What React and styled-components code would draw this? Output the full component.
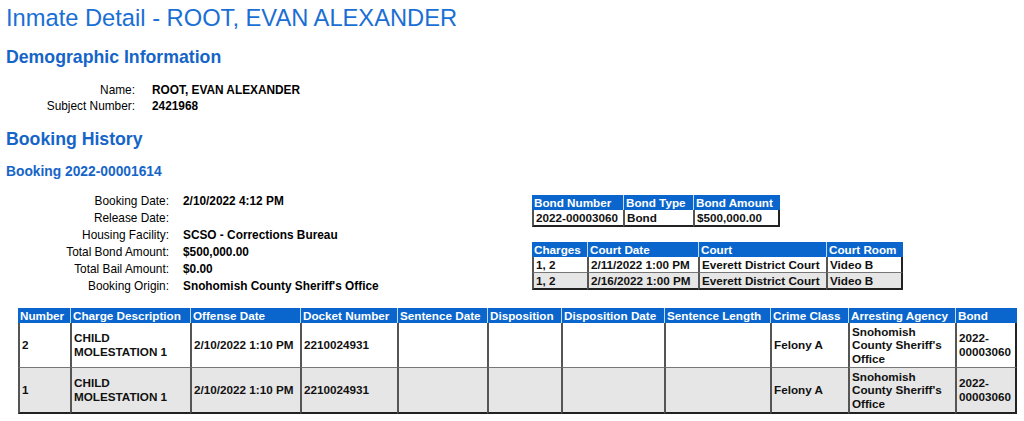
import React from "react";
import styled, { createGlobalStyle } from "styled-components";

const GlobalStyle = createGlobalStyle`
  body {
    margin: 0;
    background: #fff;
    font-family: "Liberation Sans", Arial, sans-serif;
    color: #111;
  }
`;

const Page = styled.div`
  padding: 4px 6px 0 6px;
  width: 1024px;
  box-sizing: border-box;
`;

const Title = styled.h1`
  margin: 0;
  font-size: 23.7px;
  line-height: 28px;
  font-weight: normal;
  color: #1a6fd4;
`;

const SectionTitle = styled.h2`
  margin: ${(p) => p.$top}px 0 0 0;
  font-size: 17.7px;
  line-height: 22px;
  font-weight: bold;
  color: #1565c8;
`;

const BookingTitle = styled.h3`
  margin: 14px 0 0 0;
  font-size: 13.8px;
  line-height: 16px;
  font-weight: bold;
  color: #1565c8;
`;

const Details = styled.div`
  display: grid;
  grid-template-columns: ${(p) => p.$labelWidth}px auto;
  grid-auto-rows: ${(p) => p.$rowHeight}px;
  column-gap: ${(p) => p.$gap}px;
  align-items: center;
  margin: ${(p) => p.$top}px 0 0 12px;
  font-size: 11.85px;
  align-content: start;
`;

const Label = styled.div`
  text-align: right;
  white-space: nowrap;
  color: #000;
`;

const Value = styled.div`
  font-weight: bold;
  white-space: nowrap;
  color: #000;
`;

const BookingTop = styled.div`
  display: flex;
  align-items: flex-start;
`;

const LeftCol = styled.div`
  width: 526px;
`;

const RightCol = styled.div`
  display: flex;
  flex-direction: column;
  align-items: flex-start;
  gap: 15px;
  padding-top: 15px;
`;

const Grid = styled.table`
  border-collapse: separate;
  border-spacing: 0;
  font-size: 11.7px;
  table-layout: fixed;
  margin-left: ${(p) => p.$indent || 0}px;
  margin-top: ${(p) => p.$top || 0}px;
  color: #111;
`;

const Th = styled.th`
  box-sizing: border-box;
  width: ${(p) => p.$w}px;
  background: #0a66cc;
  color: #fff;
  font-weight: bold;
  text-align: left;
  padding: 0 2px;
  height: 15px;
  line-height: 15px;
  white-space: nowrap;
  overflow: hidden;
  border-left: 1px solid #c4daf2;
  &:first-child {
    border-left: none;
  }
`;

const Tr = styled.tr`
  background: ${(p) => (p.$alt ? "#e6e6e6" : "#fff")};
`;

const Td = styled.td`
  font-weight: bold;
  padding: 0 2px;
  height: ${(p) => p.$h}px;
  line-height: 13.6px;
  vertical-align: middle;
  white-space: ${(p) => (p.$wrap ? "normal" : "nowrap")};
  border-left: 2px solid #555;
  border-bottom: 1px solid #777;
  &:last-child {
    border-right: 2px solid #222;
  }
  tr:last-child > & {
    border-bottom: 2px solid #222;
  }
`;

const demographic = [
  ["Name:", "ROOT, EVAN ALEXANDER"],
  ["Subject Number:", "2421968"],
];

const booking = [
  ["Booking Date:", "2/10/2022 4:12 PM"],
  ["Release Date:", ""],
  ["Housing Facility:", "SCSO - Corrections Bureau"],
  ["Total Bond Amount:", "$500,000.00"],
  ["Total Bail Amount:", "$0.00"],
  ["Booking Origin:", "Snohomish County Sheriff's Office"],
];

const bondCols = [
  ["Bond Number", 91],
  ["Bond Type", 70],
  ["Bond Amount", 87],
];
const bonds = [["2022-00003060", "Bond", "$500,000.00"]];

const courtCols = [
  ["Charges", 55],
  ["Court Date", 111],
  ["Court", 128],
  ["Court Room", 77],
];
const courts = [
  ["1, 2", "2/11/2022 1:00 PM", "Everett District Court", "Video B"],
  ["1, 2", "2/16/2022 1:00 PM", "Everett District Court", "Video B"],
];

const chargeCols = [
  ["Number", 52],
  ["Charge Description", 120],
  ["Offense Date", 110],
  ["Docket Number", 97],
  ["Sentence Date", 90],
  ["Disposition", 74],
  ["Disposition Date", 103],
  ["Sentence Length", 106],
  ["Crime Class", 78],
  ["Arresting Agency", 107],
  ["Bond", 62],
];

const charge = (n) => [
  n,
  "CHILD MOLESTATION 1",
  "2/10/2022 1:10 PM",
  "2210024931",
  "",
  "",
  "",
  "",
  "Felony A",
  "Snohomish County Sheriff's Office",
  "2022-00003060",
];
const charges = [charge("2"), charge("1")];

const DataTable = ({ cols, rows, rowHeight, wrap, ...rest }) => (
  <Grid {...rest}>
    <thead>
      <tr>
        {cols.map(([name, w]) => (
          <Th key={name} $w={w}>
            {name}
          </Th>
        ))}
      </tr>
    </thead>
    <tbody>
      {rows.map((row, i) => (
        <Tr key={i} $alt={i % 2 === 1}>
          {row.map((cell, j) => (
            <Td key={j} $h={rowHeight} $wrap={wrap}>
              {cell}
            </Td>
          ))}
        </Tr>
      ))}
    </tbody>
  </Grid>
);

const DetailList = ({ items, labelWidth, rowHeight, top, gap }) => (
  <Details $labelWidth={labelWidth} $rowHeight={rowHeight} $top={top} $gap={gap}>
    {items.map(([label, value]) => (
      <React.Fragment key={label}>
        <Label>{label}</Label>
        <Value>{value}</Value>
      </React.Fragment>
    ))}
  </Details>
);

const App = () => (
  <Page>
    <GlobalStyle />
    <Title>Inmate Detail - ROOT, EVAN ALEXANDER</Title>
    <SectionTitle $top={14}>Demographic Information</SectionTitle>
    <DetailList items={demographic} labelWidth={117} rowHeight={16} top={14} gap={17} />
    <SectionTitle $top={14}>Booking History</SectionTitle>
    <BookingTitle>Booking 2022-00001614</BookingTitle>
    <BookingTop>
      <LeftCol>
        <DetailList items={booking} labelWidth={151} rowHeight={17} top={12} gap={14} />
      </LeftCol>
      <RightCol>
        <DataTable cols={bondCols} rows={bonds} rowHeight={15} />
        <DataTable cols={courtCols} rows={courts} rowHeight={15} />
      </RightCol>
    </BookingTop>
    <DataTable
      cols={chargeCols}
      rows={charges}
      rowHeight={44}
      wrap
      $indent={12}
      $top={14}
    />
  </Page>
);

export default App;
